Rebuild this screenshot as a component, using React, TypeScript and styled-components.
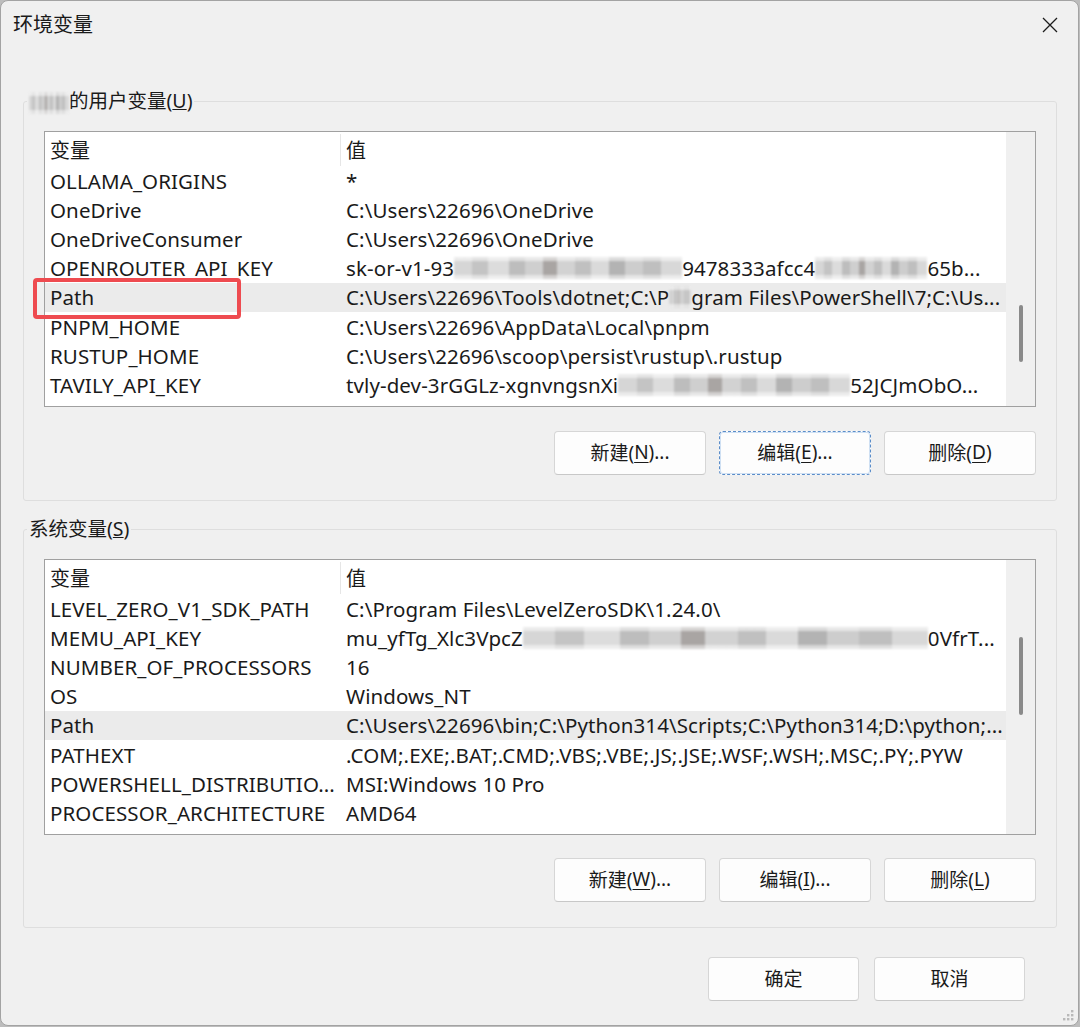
import React from 'react';
import styled, { createGlobalStyle, css } from 'styled-components';

const GlobalStyle = createGlobalStyle`
  html, body { margin: 0; padding: 0; background: #bdbdbd; }
  body { font-family: "Noto Sans", "Noto Sans CJK SC", sans-serif; }
`;

const Window = styled.div`
  box-sizing: border-box;
  width: 1079px;
  height: 1026px;
  background: #f0f0f0;
  border: 1px solid #a3a3a3;
  border-radius: 8px;
  display: flex;
  flex-direction: column;
  position: relative;
  color: #1a1a1a;
  font-size: 20px;
  overflow: hidden;
`;

const TitleBar = styled.div`
  height: 48px;
  display: flex;
  align-items: center;
  justify-content: space-between;
  padding: 0 20px 0 12px;
  flex-shrink: 0;
`;

const Title = styled.div`
  font-size: 20px;
  line-height: 1;
`;

const CloseButton = styled.div`
  width: 16px;
  height: 16px;
  display: flex;
`;

const Content = styled.div`
  display: flex;
  flex-direction: column;
  padding: 38px 21px 0 22px;
`;

const Group = styled.fieldset<{ $mt?: number }>`
  margin: ${p => p.$mt ?? 0}px 0 0 0;
  padding: 16px 20px 25px 20px;
  border: 1px solid #dedede;
  border-radius: 3px;
  min-width: 0;
`;

const Legend = styled.legend`
  padding: 0 2px;
  margin-left: -17px;
  font-size: 19.5px;
  line-height: 28px;
  white-space: nowrap;
`;

const ListBox = styled.div<{ $h: number }>`
  box-sizing: border-box;
  height: ${p => p.$h}px;
  border: 1px solid #a0a0a0;
  background: #fff;
  display: flex;
`;

const ListBody = styled.div`
  flex: 1;
  min-width: 0;
  display: flex;
  flex-direction: column;
  padding-top: 2px;
  font-size: 20.5px;
  letter-spacing: 0.1px;
`;

const HeaderRow = styled.div`
  display: grid;
  grid-template-columns: 296px 1fr;
  height: 32px;
  align-items: stretch;
`;

const HeaderCell = styled.div<{ $sep?: boolean }>`
  display: flex;
  align-items: center;
  padding: 0 0 2px 5px;
  font-size: 20px;
  letter-spacing: 0;
  ${p => p.$sep && css`border-right: 1px solid #e6e6e6;`}
`;

const Row = styled.div<{ $selected?: boolean }>`
  display: grid;
  grid-template-columns: 296px 1fr;
  height: 29.2px;
  align-items: center;
  position: relative;
  background: ${p => (p.$selected ? '#ebebeb' : 'transparent')};
`;

const Cell = styled.div`
  padding-left: 5px;
  white-space: nowrap;
  overflow: hidden;
  display: flex;
  align-items: center;
`;

const Highlight = styled.div`
  position: absolute;
  left: -12px;
  top: -5px;
  width: 208px;
  height: 41px;
  box-sizing: border-box;
  border: 4px solid #ee4b50;
  border-radius: 4px;
  pointer-events: none;
`;

const Scrollbar = styled.div`
  width: 29px;
  background: #f0f0f0;
  position: relative;
  flex-shrink: 0;
`;

const Thumb = styled.div<{ $top: number; $h: number }>`
  position: absolute;
  left: 13px;
  top: ${p => p.$top}px;
  height: ${p => p.$h}px;
  width: 4px;
  border-radius: 2px;
  background: #8a8a8a;
`;

const Redact = styled.span<{ $w: number }>`
  display: inline-block;
  width: ${p => p.$w}px;
  height: 22px;
  flex-shrink: 0;
  filter: blur(1.2px);
  background:
    linear-gradient(180deg, rgba(255,255,255,0.55) 0 18%, transparent 18% 82%, rgba(255,255,255,0.5) 82% 100%),
    linear-gradient(90deg,
      #d6d6d6 0 8%, #c4c4c4 8% 15%, #dcdcdc 15% 24%, #bdbdbd 24% 31%,
      #cfcfcf 31% 39%, #a9a5a3 39% 45%, #d2d2d2 45% 53%, #c0c0c0 53% 60%,
      #dadada 60% 68%, #b3b3b3 68% 75%, #cdcdcd 75% 83%, #bfbfbf 83% 91%, #d8d8d8 91% 100%);
`;

const ButtonRow = styled.div<{ $mt: number; $gap: number }>`
  display: flex;
  justify-content: flex-end;
  gap: ${p => p.$gap}px;
  margin-top: ${p => p.$mt}px;
`;

const Button = styled.button<{ $focused?: boolean; $w?: number }>`
  box-sizing: border-box;
  width: ${p => p.$w ?? 152}px;
  height: 44px;
  background: #fdfdfd;
  border: 1px solid #d6d6d6;
  border-bottom-color: #c8c8c8;
  border-radius: 4px;
  font-family: inherit;
  font-size: 19px;
  color: #1a1a1a;
  padding: 0 0 2px 0;
  display: flex;
  align-items: center;
  justify-content: center;
  ${p =>
    p.$focused &&
    css`
      border: 1px dashed #5b8dc9;
      box-shadow: inset 0 0 0 1px #cfe0f3;
    `}
  u {
    text-decoration-thickness: 1px;
    text-underline-offset: 3px;
  }
`;

const Footer = styled.div`
  display: flex;
  justify-content: flex-end;
  gap: 15px;
  margin: 29px 32px 0 0;
`;

const Grip = styled.svg`
  position: absolute;
  right: 3px;
  bottom: 3px;
`;

const Mn = ({ c }: { c: string }) => <u>{c}</u>;

type Item = { name: string; value: React.ReactNode; selected?: boolean; mark?: boolean };

const userVars: Item[] = [
  { name: 'OLLAMA_ORIGINS', value: '*' },
  { name: 'OneDrive', value: 'C:\\Users\\22696\\OneDrive' },
  { name: 'OneDriveConsumer', value: 'C:\\Users\\22696\\OneDrive' },
  {
    name: 'OPENROUTER_API_KEY',
    value: (
      <>
        sk-or-v1-93<Redact $w={228} />9478333afcc4<Redact $w={112} />65b...
      </>
    ),
  },
  {
    name: 'Path',
    selected: true,
    mark: true,
    value: (
      <>
        C:\Users\22696\Tools\dotnet;C:\P<Redact $w={22} />gram Files\PowerShell\7;C:\Us...
      </>
    ),
  },
  { name: 'PNPM_HOME', value: 'C:\\Users\\22696\\AppData\\Local\\pnpm' },
  { name: 'RUSTUP_HOME', value: 'C:\\Users\\22696\\scoop\\persist\\rustup\\.rustup' },
  {
    name: 'TAVILY_API_KEY',
    value: (
      <>
        tvly-dev-3rGGLz-xgnvngsnXi<Redact $w={232} />52JCJmObO...
      </>
    ),
  },
];

const sysVars: Item[] = [
  { name: 'LEVEL_ZERO_V1_SDK_PATH', value: 'C:\\Program Files\\LevelZeroSDK\\1.24.0\\' },
  {
    name: 'MEMU_API_KEY',
    value: (
      <>
        mu_yfTg_Xlc3VpcZ<Redact $w={405} />0VfrT...
      </>
    ),
  },
  { name: 'NUMBER_OF_PROCESSORS', value: '16' },
  { name: 'OS', value: 'Windows_NT' },
  {
    name: 'Path',
    selected: true,
    value: 'C:\\Users\\22696\\bin;C:\\Python314\\Scripts;C:\\Python314;D:\\python;...',
  },
  { name: 'PATHEXT', value: '.COM;.EXE;.BAT;.CMD;.VBS;.VBE;.JS;.JSE;.WSF;.WSH;.MSC;.PY;.PYW' },
  { name: 'POWERSHELL_DISTRIBUTIO...', value: 'MSI:Windows 10 Pro' },
  { name: 'PROCESSOR_ARCHITECTURE', value: 'AMD64' },
];

const VarList = ({ items, h, thumbTop, thumbH }: { items: Item[]; h: number; thumbTop: number; thumbH: number }) => (
  <ListBox $h={h}>
    <ListBody>
      <HeaderRow>
        <HeaderCell $sep>变量</HeaderCell>
        <HeaderCell>值</HeaderCell>
      </HeaderRow>
      {items.map((it, i) => (
        <Row key={i} $selected={it.selected}>
          <Cell>{it.name}</Cell>
          <Cell>{it.value}</Cell>
          {it.mark && <Highlight />}
        </Row>
      ))}
    </ListBody>
    <Scrollbar>
      <Thumb $top={thumbTop} $h={thumbH} />
    </Scrollbar>
  </ListBox>
);

export default function App() {
  return (
    <>
      <GlobalStyle />
      <Window>
        <TitleBar>
          <Title>环境变量</Title>
          <CloseButton>
            <svg width="16" height="16" viewBox="0 0 16 16">
              <path d="M1 1 L15 15 M15 1 L1 15" stroke="#1c1c1c" strokeWidth="1.3" fill="none" />
            </svg>
          </CloseButton>
        </TitleBar>
        <Content>
          <Group>
            <Legend>
              <Redact $w={40} style={{ verticalAlign: 'middle' }} />的用户变量(<Mn c="U" />)
            </Legend>
            <VarList items={userVars} h={276} thumbTop={173} thumbH={57} />
            <ButtonRow $mt={24} $gap={13}>
              <Button>
                新建(<Mn c="N" />)...
              </Button>
              <Button $focused>
                编辑(<Mn c="E" />)...
              </Button>
              <Button>
                删除(<Mn c="D" />)
              </Button>
            </ButtonRow>
          </Group>
          <Group $mt={14}>
            <Legend>
              系统变量(<Mn c="S" />)
            </Legend>
            <VarList items={sysVars} h={276} thumbTop={77} thumbH={78} />
            <ButtonRow $mt={23} $gap={13}>
              <Button>
                新建(<Mn c="W" />)...
              </Button>
              <Button>
                编辑(<Mn c="I" />)...
              </Button>
              <Button>
                删除(<Mn c="L" />)
              </Button>
            </ButtonRow>
          </Group>
          <Footer>
            <Button $w={151}>确定</Button>
            <Button $w={151}>取消</Button>
          </Footer>
        </Content>
        <Grip width="14" height="14" viewBox="0 0 14 14">
          {[
            [10, 2],
            [6, 6],
            [10, 6],
            [2, 10],
            [6, 10],
            [10, 10],
          ].map(([x, y], i) => (
            <rect key={i} x={x} y={y} width="2.4" height="2.4" fill="#b9b9b9" />
          ))}
        </Grip>
      </Window>
    </>
  );
}
